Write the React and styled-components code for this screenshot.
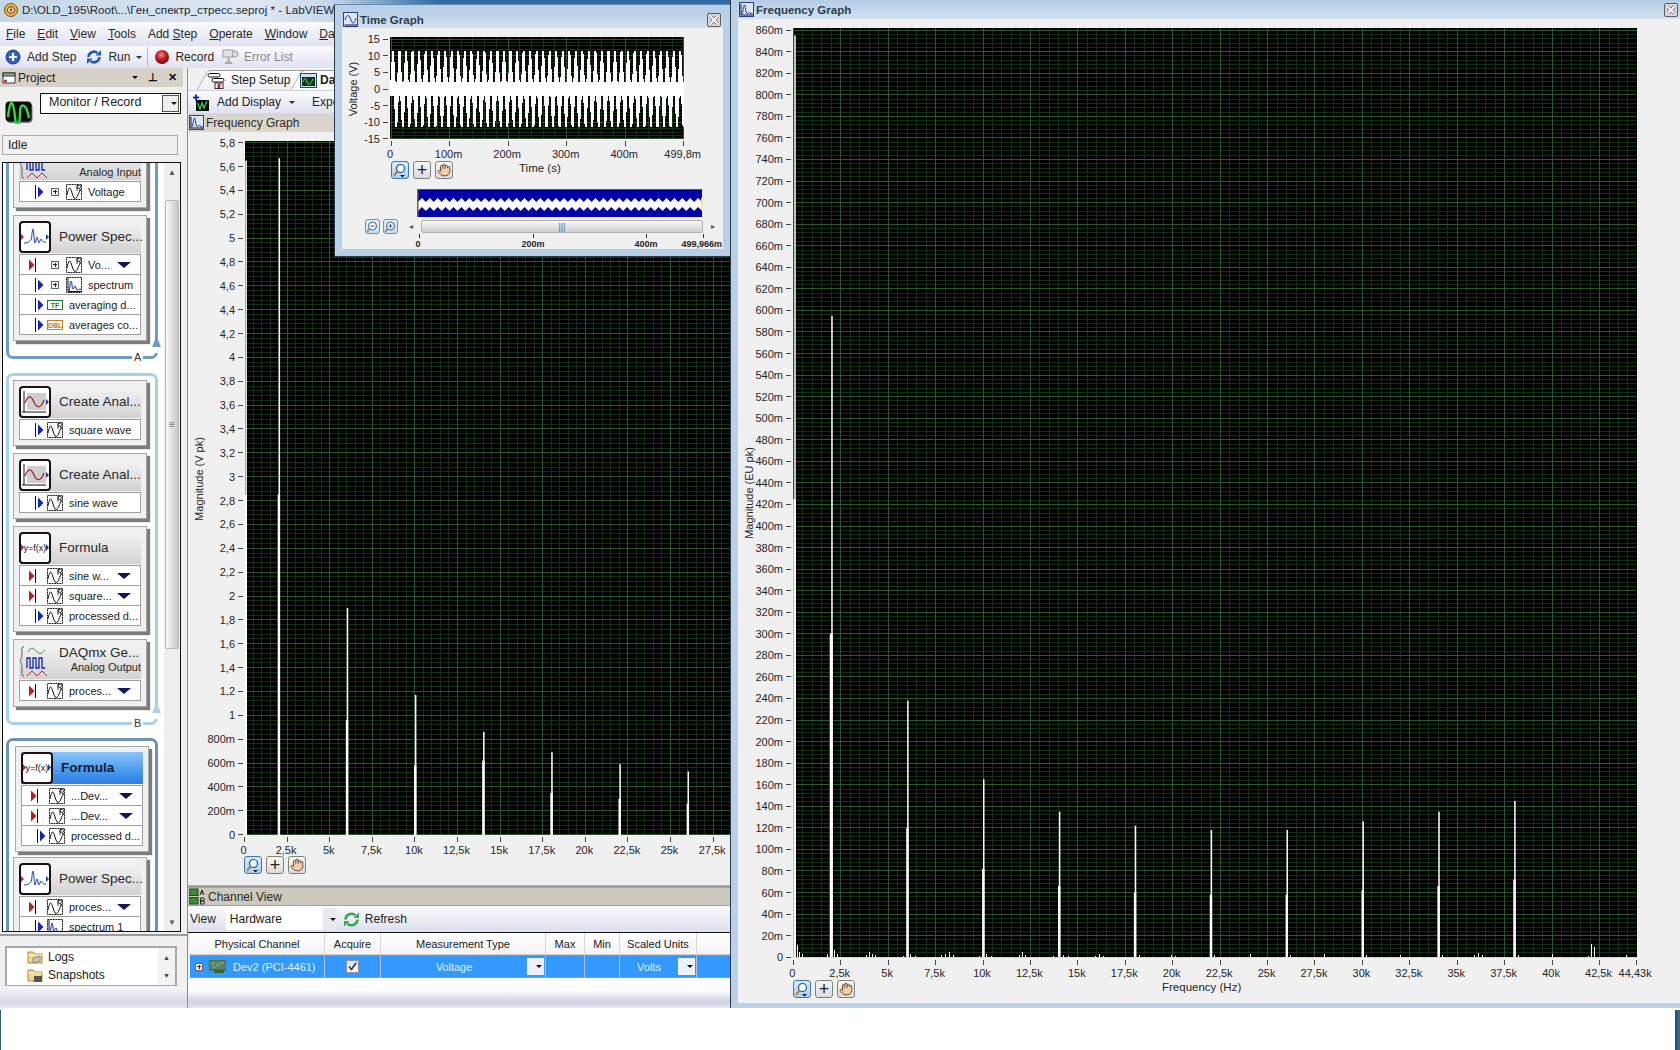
import React from "react";
import styled, { createGlobalStyle } from "styled-components";
import { Hand } from "lucide-react";

const Global = createGlobalStyle`
  html, body { margin: 0; padding: 0; background: #fff; }
  body { font-family: "Liberation Sans", Arial, sans-serif; font-size: 12px; color: #222; }
  * { box-sizing: border-box; }
`;

const Desktop = styled.div`
  position: relative;
  width: 1680px;
  height: 1050px;
  overflow: hidden;
  background: #fff;
`;

const EdgeStrip = styled.div`
  position: absolute;
  top: 1010px;
  bottom: 0;
  ${(p) => (p.$right ? "right: 0; width: 5px;" : "left: 0; width: 1px;")}
  background: linear-gradient(90deg, #1f4a70, #3d6e96);
`;

/* main LabVIEW window */
const MainWindow = styled.div`
  isolation: isolate;
  width: 731px;
  height: 1008px;
  display: flex;
  flex-direction: column;
  background: #f0f0f0;
`;

const TitleBar = styled.div`
  height: 22px;
  display: flex;
  align-items: center;
  gap: 4px;
  padding: 0 0 3px 4px;
  font-size: 11.6px;
  color: #1c2733;
  white-space: nowrap;
  background: linear-gradient(90deg, #c4d6e8, #e0e8f2 35%, #c8d8ea 45%, #2f6aa2 60%, #2f6aa2);
`;

const Bar = styled.div`
  height: ${(p) => p.$h}px;
  display: flex;
  align-items: center;
  white-space: nowrap;
  overflow: hidden;
  background: linear-gradient(180deg, #fbfbfe, #dfe2f0);
`;

const MenuBar = styled(Bar)`
  padding-left: 6px;
  gap: 12px;
  font-size: 12px;
  color: #2a2a2a;
`;

const ToolBar = styled(Bar)`
  padding-left: 5px;
  font-size: 12px;
  color: #2a2a2a;
`;

const ToolLabel = styled.span`
  margin: 0 ${(p) => p.$after || 0}px 0 ${(p) => p.$before || 6}px;
  color: ${(p) => (p.$muted ? "#8a8a8a" : "inherit")};
`;

const Caret = styled.span`
  display: inline-block;
  width: 0;
  height: 0;
  margin: 0 ${(p) => p.$after || 0}px 0 ${(p) => p.$before || 6}px;
  border-left: 3px solid transparent;
  border-right: 3px solid transparent;
  border-top: 3px solid ${(p) => p.$color || "#333"};
`;

const ToolSep = styled.span`
  width: 1px;
  height: 20px;
  margin: 0 6px 0 5px;
  background: #b4b7c4;
`;

const Body = styled.div`
  flex: 1;
  display: flex;
  min-height: 0;
`;

/* left pane */
const LeftPane = styled.div`
  width: 187px;
  display: flex;
  flex-direction: column;
  background: #f0f0f0;
`;

const PanelHeader = styled.div`
  height: 19px;
  width: 183px;
  display: flex;
  align-items: center;
  padding: 0 6px 0 2px;
  gap: 2px;
  font-size: 12px;
  background: #d5d1c9;
`;

const HeaderGlyphs = styled.span`
  margin-left: auto;
  display: flex;
  align-items: center;
  gap: 10px;
  font-size: 11px;
  font-weight: bold;
  color: #111;
`;

const ComboRow = styled.div`
  height: 30px;
  margin-top: 6px;
  padding-left: 5px;
  display: flex;
  align-items: flex-start;
  gap: 7px;
`;

const ComboBox = styled.div`
  width: 141px;
  height: 21px;
  display: flex;
  align-items: center;
  padding: 0 0 0 8px;
  font-size: 12.5px;
  background: #fff;
  border: 1px solid #111;
`;

const ComboText = styled.span`
  margin-top: -3px;
`;

const ComboDrop = styled.span`
  margin-left: auto;
  margin-right: 1px;
  width: 17px;
  height: 17px;
  display: flex;
  align-items: center;
  justify-content: center;
  background: #eee;
  border: 1px solid #555;
`;

const IconSlot = styled.span`
  flex: none;
  margin-top: 7px;
`;

const StatusBox = styled.div`
  width: 176px;
  height: 20px;
  margin: 12px 0 0 2px;
  padding-left: 5px;
  display: flex;
  align-items: center;
  font-size: 12px;
  background: #f0f0f0;
  border: 1px solid #aaa;
`;

const SequenceBox = styled.div`
  width: 179px;
  height: 770px;
  margin: 7px 0 0 2px;
  display: flex;
  background: #fff;
  border: 1px solid #111;
`;

const Scroller = styled.div`
  flex: 1;
  min-width: 0;
  overflow: hidden;
`;

const ScrollTrack = styled.div`
  width: 16px;
  display: flex;
  flex-direction: column;
  align-items: center;
  background: #eeeeee;
`;

const ScrollArrow = styled.div`
  height: 18px;
  display: flex;
  align-items: center;
  justify-content: center;
  margin-top: ${(p) => p.$push || 0};
  color: #555;
  font-size: 8px;
`;

const ScrollThumb = styled.div`
  width: 14px;
  height: 449px;
  margin-top: 19px;
  display: flex;
  align-items: center;
  justify-content: center;
  color: #777;
  font-size: 10px;
  border: 1px solid #bbb;
  border-radius: 2px;
  background: linear-gradient(90deg, #fafafa, #dcdcdc 60%, #c4c4c4);
`;

const Loop = styled.div`
  position: relative;
  width: 152px;
  margin: ${(p) => p.$margin};
  padding: ${(p) => p.$padding};
  display: flex;
  flex-direction: column;
  gap: ${(p) => p.$gap || 7}px;
  border: 3px solid ${(p) => p.$color};
  border-top-width: ${(p) => (p.$open ? 0 : 3)}px;
  border-radius: ${(p) => (p.$open ? "0 0 7px 7px" : "7px")};
`;

const LoopArrow = styled.svg`
  position: absolute;
  right: -6px;
  bottom: 9px;
`;

const LoopGap = styled.span`
  position: absolute;
  right: -3px;
  bottom: 3px;
  width: 3px;
  height: 6px;
  background: #fff;
`;

const LoopLabel = styled.span`
  position: absolute;
  left: 123px;
  bottom: -7px;
  padding: 0 2px;
  font-size: 11px;
  line-height: 12px;
  color: #333;
  background: #fff;
`;

const Card = styled.div`
  width: 134px;
  margin-left: ${(p) => (p.$selected ? 6 : 4)}px;
  padding: 5px;
  background: #f0f0f0;
  border: 1px solid #a8a8a8;
  box-shadow: 3px 3px 1px #7c7c7c;
`;

const CardHead = styled.div`
  height: ${(p) => (p.$tall ? 34 : 32)}px;
  margin-bottom: 1px;
  display: flex;
  align-items: center;
  background: ${(p) =>
    p.$selected
      ? "linear-gradient(180deg, #8cc4f8, #3f92ec 70%, #2f7fe0)"
      : "linear-gradient(180deg, #f4f4f4, #d2d2d2)"};
`;

const CardTitles = styled.div`
  flex: 1;
  min-width: 0;
  align-self: ${(p) => (p.$tall ? "flex-start" : "center")};
  padding-left: 8px;
  display: flex;
  flex-direction: column;
`;

const CardTitle = styled.div`
  min-height: 16px;
  font-size: 13.5px;
  font-weight: ${(p) => (p.$selected ? "bold" : "normal")};
  line-height: 16px;
  color: ${(p) => (p.$selected ? "#0a1c33" : "#2a2a2a")};
  white-space: nowrap;
`;

const CardSub = styled.div`
  font-size: 11px;
  line-height: 13px;
  text-align: right;
  white-space: nowrap;
  color: #2a2a2a;
`;

const StepIconFrame = styled.span`
  flex: none;
  width: 32px;
  height: 32px;
  background: #fff;
  border: 2px solid #1c0f1a;
  border-radius: 4px;
  display: block;
`;

const IoRow = styled.div`
  height: 21px;
  display: flex;
  align-items: center;
  font-size: 11px;
  color: #222;
  white-space: nowrap;
  background: #fff;
  border: 1px solid #a0a0a0;
  & + & { margin-top: -1px; }
`;

const RowText = styled.span`
  margin-left: 6px;
`;

const RowSpacer = styled.span`
  flex: none;
  width: 3px;
`;

const PlusBox = styled.span`
  flex: none;
  width: 8px;
  height: 8px;
  margin: 0 ${(p) => p.$r ?? 7}px 0 ${(p) => p.$l ?? 7}px;
  position: relative;
  border: 1px solid #666;
  background: #f4f4f4;
  &::before { content: ""; position: absolute; left: 1px; right: 1px; top: 2.5px; height: 1px; background: #222; }
  &::after { content: ""; position: absolute; top: 1px; bottom: 1px; left: 2.5px; width: 1px; background: #222; }
`;

const TypeTag = styled.span`
  flex: none;
  width: 16px;
  height: 10px;
  font-size: 7px;
  font-weight: bold;
  line-height: 9px;
  text-align: center;
  color: ${(p) => p.$color};
  background: #fff;
  border: 1px solid ${(p) => p.$color};
`;

const RowDrop = styled.span`
  margin-left: auto;
  margin-right: 9px;
  width: 0;
  height: 0;
  border-left: 7px solid transparent;
  border-right: 7px solid transparent;
  border-top: 6px solid #12125c;
`;

const PaneRule = styled.div`
  height: 2px;
  margin-top: 2px;
  background: #9b9b9b;
`;

const TreeBox = styled.div`
  width: 172px;
  height: 40px;
  margin: 10px 0 0 5px;
  display: flex;
  background: #fff;
  border: 2px solid #a8a8a8;
  border-bottom-width: 1px;
`;

const TreeList = styled.div`
  flex: 1;
  padding: 0 0 0 20px;
  display: flex;
  flex-direction: column;
  gap: 1px;
`;

const TreeItem = styled.div`
  height: 17px;
  display: flex;
  align-items: center;
  gap: 5px;
  font-size: 12px;
`;

const TreeScroll = styled.div`
  width: 17px;
  display: flex;
  flex-direction: column;
  justify-content: space-around;
  align-items: center;
  font-size: 7px;
  color: #444;
  background: #f2f2f2;
`;

const BottomBand = styled.div`
  flex: 1;
  margin-top: 1px;
  background: linear-gradient(180deg, #f6f6fb, #d6d9e8 70%, #e4e6f0);
`;

/* right side of the main window */
const RightPane = styled.div`
  flex: 1;
  min-width: 0;
  display: flex;
  flex-direction: column;
  border-left: 1px solid #8d8d8d;
  overflow: hidden;
`;

const TabStrip = styled.div`
  height: 22px;
  padding: 2px 0 0 14px;
  display: flex;
  background: #f0f0f0;
`;

const Tab = styled.div`
  position: relative;
  z-index: ${(p) => (p.$active ? 1 : 0)};
  height: 20px;
  margin-left: ${(p) => (p.$active ? -6 : 0)}px;
  padding: 0 4px 0 ${(p) => (p.$active ? 4 : 5)}px;
  width: ${(p) => p.$w}px;
  display: flex;
  align-items: center;
  gap: ${(p) => (p.$active ? 3 : 6)}px;
  font-size: 12px;
  font-weight: ${(p) => (p.$active ? "bold" : "normal")};
  white-space: nowrap;
  &::before {
    content: "";
    position: absolute;
    inset: 0;
    z-index: -1;
    background: linear-gradient(180deg, #fff, ${(p) => (p.$active ? "#fff" : "#eceef4")});
    border: 1px solid #9a9a9a;
    border-bottom: 0;
    border-radius: 3px 3px 0 0;
    transform: skewX(-30deg);
  }
`;

const AddDisplayBar = styled(Bar)`
  padding-left: 4px;
  font-size: 12px;
  border-top: 1px solid #cfcfd8;
`;

const SectionBar = styled.div`
  height: ${(p) => p.$h}px;
  display: flex;
  align-items: center;
  gap: 2px;
  padding-left: 1px;
  font-size: 12px;
  color: #2a2a2a;
  background: ${(p) => p.$bg};
  border-top: ${(p) => (p.$rule ? "2px solid #a5a29a" : "0")};
  border-bottom: ${(p) => (p.$rule ? "1px solid #a5a29a" : "0")};
`;

const GraphPane = styled.div`
  height: 754px;
  background: #f0f0f0;
  border-bottom: 1px solid #aaa;
`;

const ChartSvg = styled.svg`
  display: block;
  font-family: "Liberation Sans", Arial, sans-serif;
  font-size: 11px;
  text { fill: #262626; }
`;

const ToolRow = styled.div`
  display: flex;
  align-items: flex-start;
  padding-left: ${(p) => p.$left}px;
  gap: 4px;
`;

const ToolBtn = styled.span`
  width: 18px;
  height: 18px;
  display: flex;
  align-items: center;
  justify-content: center;
  font-size: 18px;
  line-height: 16px;
  color: #222;
  border: 1px solid ${(p) => (p.$on ? "#3a7ab0" : "#808080")};
  border-radius: 3px;
  background: ${(p) => (p.$on ? "linear-gradient(180deg, #d6ebfb, #a9d0f0)" : "linear-gradient(180deg, #f6f6f6, #dcdcdc)")};
`;

const AxisTitle = styled.span`
  margin-left: ${(p) => p.$offset}px;
  font-size: 11.5px;
  line-height: 14px;
  color: #262626;
`;

const ChannelTools = styled.div`
  height: 26px;
  display: flex;
  align-items: center;
  padding-left: 2px;
  font-size: 12px;
  background: linear-gradient(180deg, #fbfbfe, #dde0ee);
`;

const ChannelCombo = styled.div`
  width: 111px;
  height: 22px;
  margin: 0 6px 0 10px;
  padding-left: 4px;
  display: flex;
  align-items: center;
  background: #fff;
`;

const ChannelDrop = styled.span`
  margin-left: auto;
  width: 14px;
  height: 100%;
  display: flex;
  align-items: center;
  justify-content: center;
  background: #e8e8ee;
`;

const ChannelTable = styled.div`
  border-top: 1px solid #111;
  display: grid;
  grid-template-columns: 135px 56px 165px 39px 35px 77px 1fr;
  padding-left: 2px;
  font-size: 11px;
`;

const HeadCell = styled.div`
  height: 22px;
  display: flex;
  align-items: center;
  justify-content: center;
  white-space: nowrap;
  border-right: 1px solid #d8d8d8;
  background: linear-gradient(180deg, #fff, #f4f4f6);
  border-bottom: 1px solid #cfcfcf;
`;

const BodyCell = styled.div`
  position: relative;
  height: 23px;
  display: flex;
  align-items: center;
  white-space: nowrap;
  justify-content: ${(p) => (p.$start ? "flex-start" : "center")};
  padding: ${(p) => p.$pad || "0"};
  color: #e0f0ff;
  background: #3399ff;
  border-top: 1px solid #8a8fa0;
  border-bottom: 1px solid #8a9ab0;
  border-right: 1px solid #b0c4d8;
`;

const DeviceName = styled.span`
  margin-left: 7px;
`;

const CellDrop = styled.span`
  position: absolute;
  right: 1px;
  top: 2px;
  width: 17px;
  height: 17px;
  display: flex;
  align-items: center;
  justify-content: center;
  background: #eef2f8;
`;

const CheckBox = styled.span`
  width: 13px;
  height: 13px;
  display: flex;
  align-items: center;
  justify-content: center;
  background: linear-gradient(180deg, #d8dce4, #fafafa);
  border: 1px solid #8a94a4;
`;

const ChannelFill = styled.div`
  flex: 1;
  background: linear-gradient(180deg, #fff, #fff 40%, #cdd1e2 80%, #e6e8f2);
`;

/* floating graph windows */
const FloatWindow = styled.div`
  position: absolute;
  left: ${(p) => p.$x}px;
  top: ${(p) => p.$y}px;
  width: ${(p) => p.$w}px;
  height: ${(p) => p.$h}px;
  display: flex;
  flex-direction: column;
  padding: ${(p) => p.$pad};
  background: #b9d1e8;
  border-left: 1px solid #2c3a48;
  border-right: ${(p) => (p.$edge ? "1px solid #2c3a48" : "0")};
  border-bottom: ${(p) => (p.$edge ? "1px solid #2c3a48" : "0")};
  border-top: ${(p) => (p.$edge ? "1px solid #5f87ad" : "0")};
`;

const WinTitle = styled.div`
  height: ${(p) => p.$h}px;
  flex: none;
  display: flex;
  align-items: center;
  gap: 2px;
  padding: 0 2px 0 1px;
  font-size: 11.5px;
  font-weight: bold;
  color: #2c3c4c;
  background: linear-gradient(180deg, #b4cde6, #d4e2f1);
`;

const WinClose = styled.svg`
  margin-left: auto;
`;

const WinContent = styled.div`
  flex: 1;
  min-height: 0;
  background: #f0f0f0;
`;

const OverviewBlock = styled.div`
  margin-top: 9px;
`;

const OverviewSvg = styled.svg`
  display: block;
`;

const OverviewScroll = styled.div`
  height: 13px;
  margin-top: 3px;
  padding-left: 23px;
  display: flex;
  align-items: center;
`;

const MiniBtn = styled.span`
  width: 15px;
  height: 15px;
  margin-right: 3px;
  display: flex;
  align-items: center;
  justify-content: center;
  border: 1px solid #6f94b8;
  border-radius: 3px;
  background: linear-gradient(180deg, #e6f1fb, #c4dcf2);
`;

const MiniArrow = styled.span`
  width: ${(p) => p.$w}px;
  text-align: center;
  font-size: 8px;
  color: #555;
`;

const OverThumb = styled.div`
  width: 284px;
  height: 13px;
  display: flex;
  align-items: center;
  justify-content: center;
  font-size: 9px;
  color: #666;
  border: 1px solid #b0b0b0;
  border-radius: 2px;
  background: linear-gradient(180deg, #f8f8f8, #cfcfcf);
`;

/* ---- icons ---- */
const AppIcon = () => (
  <svg width="14" height="14" viewBox="0 0 14 14">
    <circle cx="7" cy="7" r="6.5" fill="#e9b62c" stroke="#7a5a10" />
    <path d="M3 7l2-3h4l2 3-2 3H5z" fill="#f7f0d0" stroke="#8a2a2a" />
    <circle cx="7" cy="7" r="1.4" fill="#b03030" />
  </svg>
);

const AddIcon = () => (
  <svg width="16" height="16" viewBox="0 0 16 16">
    <circle cx="8" cy="8" r="7" fill="#2f62c8" stroke="#16357a" />
    <path d="M8 4v8M4 8h8" stroke="#fff" strokeWidth="2.2" />
  </svg>
);

const RunIcon = () => (
  <svg width="16" height="16" viewBox="0 0 16 16" fill="none">
    <path d="M2.5 8a5.5 5.5 0 0 1 9-4" stroke="#1f5ec0" strokeWidth="2.6" />
    <path d="M9.5 6.5h5.5V1z" fill="#1f5ec0" />
    <path d="M13.5 8a5.5 5.5 0 0 1-9 4" stroke="#1f5ec0" strokeWidth="2.6" />
    <path d="M6.5 9.5H1V15z" fill="#1f5ec0" />
  </svg>
);

const RecordIcon = () => (
  <svg width="16" height="16" viewBox="0 0 16 16">
    <defs>
      <radialGradient id="rec" cx="45%" cy="35%" r="65%">
        <stop offset="0" stopColor="#f09090" />
        <stop offset="0.5" stopColor="#c82020" />
        <stop offset="1" stopColor="#6a0808" />
      </radialGradient>
    </defs>
    <circle cx="8" cy="8" r="7" fill="url(#rec)" />
  </svg>
);

const ErrorListIcon = () => (
  <svg width="17" height="16" viewBox="0 0 17 16">
    <rect x="1" y="1" width="10" height="7" fill="#e4e4e4" stroke="#9a9a9a" />
    <rect x="5" y="8" width="3" height="5" fill="#bbb" />
    <rect x="3" y="13" width="7" height="2" fill="#aaa" />
    <circle cx="13" cy="5" r="3" fill="#d8d8d8" stroke="#a0a0a0" />
  </svg>
);

const ProjectIcon = () => (
  <svg width="14" height="14" viewBox="0 0 14 14">
    <rect x="1" y="2" width="12" height="10" fill="#fff" stroke="#335" />
    <rect x="1" y="2" width="12" height="3" fill="#7fb56f" stroke="#335" />
    <circle cx="3.5" cy="10" r="1.6" fill="#b03030" />
  </svg>
);

const MonitorIcon = () => (
  <svg width="28" height="24" viewBox="0 0 28 24">
    <rect x="1.5" y="3" width="26" height="20" rx="4" fill="#777" />
    <rect x="0.5" y="1.5" width="26" height="20" rx="4" fill="#0a0a0a" />
    <path d="M3 17c2-19 5-19 7 0s5 4 5-5 6-10 9 6" fill="none" stroke="#37d24a" strokeWidth="2.4" />
  </svg>
);

const GraphGlyph = () => (
  <svg width="15" height="15" viewBox="0 0 15 15" fill="none">
    <rect x="0.5" y="0.5" width="14" height="14" fill="#dce8f6" stroke="#2a3f90" />
    <path d="M2 13V2M1.5 13H14" stroke="#111" />
    <path d="M3 12c1-1 1.5-9 2.5-9s1 8 2.5 8.5 1.5-2 2.5-1 2 1.5 3 1.5" stroke="#2030b0" />
  </svg>
);

const TimeGlyph = () => (
  <svg width="15" height="15" viewBox="0 0 15 15" fill="none">
    <rect x="0.5" y="0.5" width="14" height="14" fill="#dce8f6" stroke="#2a3f90" />
    <path d="M1.5 13H14" stroke="#111" />
    <path d="M2 8c2-7 4-5 6 0s3 4 5-2" stroke="#2030b0" />
  </svg>
);

const WrenchIcon = () => (
  <svg width="18" height="17" viewBox="0 0 18 17" fill="none">
    <rect x="1" y="1.5" width="12" height="3.5" rx="1.7" fill="#fff" stroke="#111" />
    <rect x="5" y="6.5" width="12" height="3.5" rx="1.7" fill="#fff" stroke="#111" />
    <rect x="8" y="11" width="8" height="5.5" fill="#fff" stroke="#333" />
    <rect x="10.5" y="11.5" width="3" height="4.5" fill="#b33" />
  </svg>
);

const DataTabIcon = () => (
  <svg width="17" height="15" viewBox="0 0 17 15" fill="none">
    <rect x="0.5" y="0.5" width="16" height="14" fill="#cfe2f5" stroke="#244a78" />
    <rect x="2" y="4" width="13" height="9" fill="#0c3a12" />
    <path d="M3 9c2-5 3-4 4 0s3 3 6-3" stroke="#7ae07a" />
  </svg>
);

const AddDisplayIcon = () => (
  <svg width="17" height="17" viewBox="0 0 17 17" fill="none">
    <path d="M4 0.5v6M1 3.5h6" stroke="#1a2fc0" strokeWidth="2" />
    <rect x="4" y="6" width="13" height="11" fill="#0a0a0a" />
    <path d="M5.5 9l2.5 6 2-6 2 5 3-7" stroke="#3ecf4a" strokeWidth="1.3" />
  </svg>
);

const ChannelIcon = () => (
  <svg width="17" height="17" viewBox="0 0 17 17">
    <rect x="0" y="1" width="9" height="6.5" fill="#3f8a3a" stroke="#174a14" />
    <rect x="0" y="9.5" width="9" height="6.5" fill="#3f8a3a" stroke="#174a14" />
    <path d="M11 7l2-5 2 5M12 5h2M11.5 10h2.5a1.5 1.5 0 0 1 0 3h-2.5zM11.5 13H14a1.5 1.5 0 0 1 0 3h-2.5z" fill="none" stroke="#222" />
  </svg>
);

const RefreshIcon = () => (
  <svg width="17" height="17" viewBox="0 0 17 17" fill="none">
    <path d="M2.5 8.5a6 6 0 0 1 10-4.2" stroke="#38a84a" strokeWidth="2.6" />
    <path d="M10.5 7H16V1.5z" fill="#38a84a" />
    <path d="M14.5 8.5a6 6 0 0 1-10 4.2" stroke="#38a84a" strokeWidth="2.6" />
    <path d="M6.5 10H1v5.5z" fill="#38a84a" />
  </svg>
);

const PciIcon = () => (
  <svg width="17" height="13" viewBox="0 0 17 13">
    <rect x="0" y="0" width="17" height="10" fill="#5d8560" stroke="#3b5a3e" />
    <path d="M3 3h2M7 5h3M11 3h3M4 7h2" stroke="#9fc09a" />
    <rect x="5" y="10" width="10" height="3" fill="#3a6040" />
  </svg>
);

const FolderIcon = ({ camera }) => (
  <svg width="16" height="16" viewBox="0 0 16 16">
    <path d="M1 3h5l2 2h7v9H1z" fill="#f2d888" stroke="#a98a3a" />
    <path d="M1 6h14" stroke="#fff3c4" />
    {camera ? <rect x="7" y="9" width="8" height="6" fill="#555" /> : <path d="M6 9l7-2v5l-7 2z" fill="#c8c8c8" stroke="#888" />}
  </svg>
);

const CloseIcon = () => (
  <WinClose width="14" height="14" viewBox="0 0 14 14">
    <rect x="0.5" y="0.5" width="13" height="13" rx="1.5" fill="#ded7dc" stroke="#5c5c5c" />
    <path d="M3.5 3.5l7 7M10.5 3.5l-7 7" stroke="#6a6a6a" strokeWidth="3.4" />
    <path d="M3.5 3.5l7 7M10.5 3.5l-7 7" stroke="#fff" strokeWidth="2" />
  </WinClose>
);

const Magnifier = () => (
  <svg width="14" height="15" viewBox="0 0 14 15" fill="none">
    <circle cx="7.5" cy="5.5" r="4" fill="#f6fbff" stroke="#24557f" strokeWidth="1.2" />
    <path d="M4.5 8.5L1 12.5" stroke="#c07a3a" strokeWidth="2" />
    <path d="M7 12h5l-2.5 2.5z" fill="#123" />
  </svg>
);

const MiniMag = ({ plus }) => (
  <svg width="12" height="12" viewBox="0 0 12 12" fill="none">
    <circle cx="6.5" cy="5" r="4" fill="#fff" stroke="#2b5f92" />
    <path d="M4.5 5h4" stroke="#2b5f92" />
    {plus ? <path d="M6.5 3v4" stroke="#2b5f92" /> : null}
    <path d="M3.5 8L1 11" stroke="#c07a3a" strokeWidth="1.6" />
  </svg>
);

const ZoomTools = () => (
  <>
    <ToolBtn $on><Magnifier /></ToolBtn>
    <ToolBtn>+</ToolBtn>
    <ToolBtn><Hand size={14} color="#4a3418" fill="#f2cfa2" strokeWidth={1.4} /></ToolBtn>
  </>
);

const WaveIcon = () => (
  <svg width="16" height="16" viewBox="0 0 16 16" fill="none">
    <rect x="0.5" y="0.5" width="15" height="15" fill="#fff" stroke="#222" strokeDasharray="2 0.6" />
    <path d="M1 11c2-9 3-9 5-2s4 7 6 2 2-5 3-6" stroke="#111" />
    <path d="M11 1.5h2.5a1.2 1.2 0 0 1 0 2.6H11zM11 1.5V7M13 4l1.5 3" stroke="#111" strokeWidth="0.8" />
  </svg>
);

const SpectrumIcon = () => (
  <svg width="16" height="16" viewBox="0 0 16 16" fill="none">
    <rect x="0.5" y="0.5" width="15" height="15" fill="#fff" stroke="#222" strokeDasharray="2 0.6" />
    <path d="M2 1v13.5H15" stroke="#111" />
    <path d="M3 14c1-2 1-10 2-10s1 8 2 8 1-3 2-3 1 4 2 4 2-1 4-1" stroke="#1420a8" />
  </svg>
);

const PortSvg = styled.svg`
  flex: none;
`;

const Port = ({ input, output }) => (
  <PortSvg width="24" height="16" viewBox="0 0 24 16">
    <rect x="15" y="1" width="1" height="14" fill="#111" />
    {input ? <path d="M9 2.5l5.5 5.5L9 13.5z" fill="#c01826" /> : null}
    {output ? <path d="M18 2.5l5.5 5.5L18 13.5z" fill="#1424b8" /> : null}
  </PortSvg>
);

const DaqSvg = styled.svg`
  flex: none;
`;

const DaqArt = () => (
  <DaqSvg width="32" height="34" viewBox="0 0 32 34" fill="none">
    <path d="M5 2c-3 0-2 1-2 6s-1 7-2 8c1 1 2 3 2 8s-1 7 2 7" stroke="#555" />
    <path d="M9 7c3-6 5-4 8-1s5 4 9-1" stroke="#2d9a3a" />
    <path d="M8 23V13h3v10h3V13h3v10h3V13h3v10h3" stroke="#1424b8" strokeWidth="1.3" />
    <path d="M8 31l5-5 5 5 5-5 5 5" stroke="#c82030" />
  </DaqSvg>
);

const StepArt = ({ kind }) => {
  if (kind === "daq") return <DaqArt />;
  return (
    <StepIconFrame>
      <svg width="28" height="28" viewBox="0 0 28 28" fill="none">
        {kind === "create" && (
          <>
            <rect x="6" y="5" width="19" height="17" fill="#cfcfcf" />
            <path d="M3 3v21M1 24h24" stroke="#111" />
            <path d="M4 15c3-8 6-8 9-1s7 6 10-2" stroke="#9a2a30" strokeWidth="1.3" />
            <path d="M25 11l3 3-3 3z" fill="#2040a0" />
          </>
        )}
        {kind === "power" && (
          <>
            <path d="M3 20c5 0 5-2 7-3 1-1 1-11 2-11s1 14 2 14 1-6 2-6 1 6 2 6 1-4 2-4 1 4 5 3" stroke="#1a40b0" />
            <path d="M0 11l3 3-3 3z" fill="#c02030" />
            <path d="M25 11l3 3-3 3z" fill="#2040a0" />
          </>
        )}
        {kind === "formula" && (
          <>
            <text x="14" y="17" fontSize="9" fontFamily="Liberation Sans, sans-serif" textAnchor="middle" fill="#111">y=f(x)</text>
            <path d="M0 10l3 3.5-3 3.5z" fill="#c02030" />
            <path d="M25 10l3 3.5-3 3.5z" fill="#2040a0" />
          </>
        )}
      </svg>
    </StepIconFrame>
  );
};

/* ---- sequence data ---- */
const inp = (text) => ({ input: true, icon: "wave", text, drop: true });
const out = (text, icon = "wave") => ({ output: true, icon, text });

const loopA = [
  { kind: "daq", title: "", sub: "Analog Input", rows: [{ output: true, plus: true, icon: "wave", text: "Voltage" }] },
  {
    kind: "power",
    title: "Power Spec...",
    rows: [
      { input: true, plus: true, icon: "wave", text: "Vo...", drop: true },
      { output: true, plus: true, icon: "spectrum", text: "spectrum" },
      { output: true, tag: ["TF", "#1f7a2a"], text: "averaging d..." },
      { output: true, tag: ["DBL", "#d07a20"], text: "averages co..." },
    ],
  },
];

const loopB = [
  { kind: "create", title: "Create Anal...", rows: [out("square wave")] },
  { kind: "create", title: "Create Anal...", rows: [out("sine wave")] },
  { kind: "formula", title: "Formula", rows: [inp("sine w..."), inp("square..."), out("processed d...")] },
  { kind: "daq", tall: true, title: "DAQmx Ge...", sub: "Analog Output", rows: [inp("proces...")] },
];

const loopC = [
  { kind: "formula", selected: true, title: "Formula", rows: [inp("...Dev..."), inp("...Dev..."), out("processed d...")] },
  { kind: "power", title: "Power Spec...", rows: [inp("proces..."), out("spectrum 1", "spectrum"), out("spectrum 2", "spectrum")] },
];

const StepCard = ({ step }) => (
  <Card $selected={step.selected}>
    <CardHead $selected={step.selected} $tall={step.tall}>
      <StepArt kind={step.kind} />
      <CardTitles $tall={step.tall}>
        <CardTitle $selected={step.selected}>{step.title}</CardTitle>
        {step.sub ? <CardSub>{step.sub}</CardSub> : null}
      </CardTitles>
    </CardHead>
    {step.rows.map((r, i) => (
      <IoRow key={i}>
        <Port input={r.input} output={r.output} />
        {r.plus ? <PlusBox /> : <RowSpacer />}
        {r.tag ? <TypeTag $color={r.tag[1]}>{r.tag[0]}</TypeTag> : null}
        {r.icon === "wave" ? <WaveIcon /> : null}
        {r.icon === "spectrum" ? <SpectrumIcon /> : null}
        <RowText>{r.text}</RowText>
        {r.drop ? <RowDrop /> : null}
      </IoRow>
    ))}
  </Card>
);

const LoopEnd = ({ label, color }) => (
  <>
    <LoopGap />
    <LoopArrow width="9" height="11" viewBox="0 0 9 11">
      <path d="M4.5 0L9 11H0z" fill={color} />
    </LoopArrow>
    <LoopLabel>{label}</LoopLabel>
  </>
);

/* ---- charts ---- */
const GRID_MAJOR = "#2a582a";
const GRID_MINOR = "#143014";

function GridPlot({ id, view, rect, xPx, yPx, xStep, yStep, xTicks, yTicks, yLabel, children }) {
  const { l, t, r, b } = rect;
  const vLines = [];
  for (let i = 0; xPx((i * xStep) / 5) <= r; i++) vLines.push([xPx((i * xStep) / 5), i % 5 === 0]);
  const hLines = [];
  for (let i = 0; yPx((i * yStep) / 5 + (rect.yFrom || 0)) >= t; i++) hLines.push([yPx((i * yStep) / 5 + (rect.yFrom || 0)), i % 5 === 0]);
  return (
    <ChartSvg width={view[2]} height={view[3]} viewBox={view.join(" ")}>
      <clipPath id={id}><rect x={l} y={t} width={r - l} height={b - t} /></clipPath>
      <rect x={l} y={t} width={r - l} height={b - t} fill="#000" />
      <g shapeRendering="crispEdges" clipPath={`url(#${id})`}>
        {hLines.filter((h) => !h[1]).map((h, i) => <line key={i} x1={l} x2={r} y1={h[0]} y2={h[0]} stroke={GRID_MINOR} />)}
        {vLines.filter((v) => !v[1]).map((v, i) => <line key={i} y1={t} y2={b} x1={v[0]} x2={v[0]} stroke={GRID_MINOR} />)}
        {hLines.filter((h) => h[1]).map((h, i) => <line key={i} x1={l} x2={r} y1={h[0]} y2={h[0]} stroke={GRID_MAJOR} />)}
        {vLines.filter((v) => v[1]).map((v, i) => <line key={i} y1={t} y2={b} x1={v[0]} x2={v[0]} stroke={GRID_MAJOR} />)}
        {children}
      </g>
      <g shapeRendering="crispEdges" stroke="#444">
        {yTicks.map(([v], i) => <line key={i} x1={l - 7} x2={l - 2} y1={yPx(v)} y2={yPx(v)} />)}
        {xTicks.map(([v], i) => <line key={i} y1={b + 2} y2={b + 7} x1={xPx(v)} x2={xPx(v)} />)}
      </g>
      {yTicks.map(([v, s], i) => <text key={i} x={l - 10} y={yPx(v) + 4} textAnchor="end">{s}</text>)}
      {xTicks.map(([v, s], i) => <text key={i} x={xPx(v) - 1} y={b + 19} textAnchor="middle">{s}</text>)}
      <text transform={`translate(${yLabel.x} ${yLabel.y}) rotate(-90)`} textAnchor="middle">{yLabel.text}</text>
    </ChartSvg>
  );
}

const Spikes = ({ list, xPx, yPx, bottom }) => (
  <g fill="#fff" shapeRendering="auto">
    {list.map(([k, top, mid, w = 2.4], i) => (
      <g key={i}>
        <rect x={xPx(k)} y={yPx(top)} width={1.5} height={bottom - yPx(top)} />
        <rect x={xPx(k) - w + 1.5} y={yPx(mid)} width={w} height={bottom - yPx(mid)} />
      </g>
    ))}
  </g>
);

const comma = (n) => String(n).replace(".", ",");
const kTicks = (max) => {
  const out = [];
  for (let v = 0; v <= max; v += 2.5) out.push([v, v === 0 ? "0" : `${comma(v)}k`]);
  return out;
};

const rightX = (k) => 793.3 + k * 18.97;
const rightY = (m) => 957.2 - m * 1.078;
const rightYTicks = [];
for (let m = 860; m >= 0; m -= 20) rightYTicks.push([m, m === 0 ? "0" : `${m}m`]);
const rightSpikes = [
  [0.05, 855, 425], [2, 595, 300, 3], [6, 238, 120], [10, 165, 82], [14, 135, 66], [18, 122, 60],
  [22, 118, 58], [26, 118, 58], [30, 126, 62], [34, 135, 66], [38, 145, 72],
];
const rightNoise = [
  [0.2, 11], [0.3, 5], [0.45, 3], [1.8, 3], [2.15, 7], [2.3, 3], [3.85, 2], [4, 5], [4.15, 3], [4.3, 2],
  [5.8, 1], [6.15, 3], [6.4, 1], [7.8, 2], [8, 3], [8.2, 5], [8.4, 2], [9.8, 1], [10.15, 3], [10.4, 1],
  [11.9, 2], [12.05, 5], [12.2, 2], [13.7, 1], [14.2, 2], [14.5, 1], [15.9, 1], [16.1, 3], [16.3, 1],
  [18.2, 2], [19.9, 2], [20.1, 1], [22.2, 2], [24.1, 3], [26.2, 2], [28, 3], [30.2, 2], [32, 2],
  [34.2, 2], [35.9, 2], [36.1, 4], [36.3, 2], [38.2, 2], [40, 3], [42.05, 12], [42.2, 9], [41.9, 1], [43.9, 2],
];

const leftX = (k) => 244.5 + k * 17.04;
const leftY = (v) => 834.6 - v * 119.3;
const leftYTicks = [];
for (let i = 29; i >= 0; i--) {
  const v = i / 5;
  leftYTicks.push([v, i === 0 ? "0" : v < 1 ? `${i * 200}m` : comma(v)]);
}
const leftSpikes = [
  [0.05, 5.65, 2.85], [2, 5.67, 2.85], [6, 1.9, 0.96], [10, 1.17, 0.58], [14, 0.86, 0.62], [18, 0.69, 0.35], [22, 0.59, 0.3], [26, 0.53, 0.26],
];

const timeX = (ms) => 391 + ms * 0.5855;
const timeY = (v) => 88 - v * 3.33;
const timeXTicks = [[0, "0"], [100, "100m"], [200, "200m"], [300, "300m"], [400, "400m"], [499.8, "499,8m"]];
const timeYTicks = [15, 10, 5, 0, -5, -10, -15].map((v) => [v, String(v)]);

// one tapered tooth of the time signal, wide at the centre band and narrow at the tip
const tooth = (c, s) =>
  `M${c - 2.8} ${timeY(s * 1)}L${c - 1.8} ${timeY(s * 6)}L${c - 1} ${timeY(s * 11.5)}L${c + 1} ${timeY(s * 11.5)}L${c + 1.8} ${timeY(s * 6)}L${c + 2.8} ${timeY(s * 1)}Z`;

const wavePath = () => {
  let d = "";
  for (let i = 0; i < 45; i++) {
    const c = 393 + i * 6.53;
    d += tooth(c, 1) + tooth(c + 3.3, -1);
  }
  return d;
};

const zigzagPath = () => {
  const n = 36;
  const step = 284 / n;
  const top = [];
  const bot = [];
  for (let i = 0; i <= n; i++) {
    top.push(`${i * step} 12`);
    if (i < n) top.push(`${i * step + step / 2} 8`);
    bot.push(`${i * step} 21`);
    if (i < n) bot.push(`${i * step + step / 2} 17`);
  }
  return `M${top.join("L")}L${bot.reverse().join("L")}Z`;
};

const menu = [
  ["F", "ile"], ["E", "dit"], ["V", "iew"], ["T", "ools"], ["Add ", "S", "tep"], ["O", "perate"], ["W", "indow"], ["D", "ata"],
];

export default function App() {
  return (
    <>
      <Global />
      <Desktop>
        <MainWindow>
          <TitleBar>
            <AppIcon />
            <span>D:\OLD_195\Root\...\Ген_спектр_стресс.seproj * - LabVIEW</span>
          </TitleBar>
          <MenuBar $h={24}>
            {menu.map((m, i) =>
              m.length === 3 ? (
                <span key={i}>{m[0]}<u>{m[1]}</u>{m[2]}</span>
              ) : (
                <span key={i}><u>{m[0]}</u>{m[1]}</span>
              )
            )}
          </MenuBar>
          <ToolBar $h={22}>
            <AddIcon />
            <ToolLabel $after={10}>Add Step</ToolLabel>
            <RunIcon />
            <ToolLabel>Run</ToolLabel>
            <Caret />
            <ToolSep />
            <RecordIcon />
            <ToolLabel $before={5} $after={8}>Record</ToolLabel>
            <ErrorListIcon />
            <ToolLabel $before={5} $muted>Error List</ToolLabel>
          </ToolBar>
          <Body>
            <LeftPane>
              <PanelHeader>
                <ProjectIcon />
                <span>Project</span>
                <HeaderGlyphs>
                  <Caret $before={0} $color="#111" />
                  <span>⊥</span>
                  <span>✕</span>
                </HeaderGlyphs>
              </PanelHeader>
              <ComboRow>
                <IconSlot><MonitorIcon /></IconSlot>
                <ComboBox>
                  <ComboText>Monitor / Record</ComboText>
                  <ComboDrop><Caret $before={0} $color="#111" /></ComboDrop>
                </ComboBox>
              </ComboRow>
              <StatusBox>Idle</StatusBox>
              <SequenceBox>
                <Scroller>
                  <Loop $open $color="#6d9cc4" $margin="-21px 0 0 3px" $padding="0 0 15px 0">
                    {loopA.map((s, i) => <StepCard key={i} step={s} />)}
                    <LoopEnd label="A" color="#6d9cc4" />
                  </Loop>
                  <Loop $color="#a9d0ee" $margin="14px 0 0 3px" $padding="4px 0 15px 0">
                    {loopB.map((s, i) => <StepCard key={i} step={s} />)}
                    <LoopEnd label="B" color="#a9d0ee" />
                  </Loop>
                  <Loop $color="#6a93b8" $gap={5} $margin="13px 0 0 3px" $padding="5px 0 15px 0">
                    {loopC.map((s, i) => <StepCard key={i} step={s} />)}
                  </Loop>
                </Scroller>
                <ScrollTrack>
                  <ScrollArrow>▲</ScrollArrow>
                  <ScrollThumb>≡</ScrollThumb>
                  <ScrollArrow $push="auto">▼</ScrollArrow>
                </ScrollTrack>
              </SequenceBox>
              <PaneRule />
              <TreeBox>
                <TreeList>
                  <TreeItem><FolderIcon />Logs</TreeItem>
                  <TreeItem><FolderIcon camera />Snapshots</TreeItem>
                </TreeList>
                <TreeScroll><span>▲</span><span>▼</span></TreeScroll>
              </TreeBox>
              <BottomBand />
            </LeftPane>

            <RightPane>
              <TabStrip>
                <Tab $w={100}><WrenchIcon />Step Setup</Tab>
                <Tab $active $w={120}><DataTabIcon />Data View</Tab>
              </TabStrip>
              <AddDisplayBar $h={23}>
                <AddDisplayIcon />
                <ToolLabel $before={8}>Add Display</ToolLabel>
                <Caret $before={8} $after={17} />
                <span>Export</span>
              </AddDisplayBar>
              <SectionBar $h={19} $bg="#dad6ce"><GraphGlyph />Frequency Graph</SectionBar>
              <GraphPane>
                <GridPlot
                  id="leftplot"
                  view={[188, 132, 542, 724]}
                  rect={{ l: 245, t: 141, r: 730, b: 835 }}
                  xPx={leftX}
                  yPx={leftY}
                  xStep={2.5}
                  yStep={0.2}
                  xTicks={kTicks(27.5)}
                  yTicks={leftYTicks}
                  yLabel={{ x: 203, y: 479, text: "Magnitude (V pk)" }}
                >
                  <Spikes list={leftSpikes} xPx={leftX} yPx={leftY} bottom={835} />
                </GridPlot>
                <ToolRow $left={56}><ZoomTools /></ToolRow>
              </GraphPane>
              <SectionBar $h={20} $rule $bg="#cdc9bf"><ChannelIcon />Channel View</SectionBar>
              <ChannelTools>
                View
                <ChannelCombo>
                  Hardware
                  <ChannelDrop><Caret $before={0} $color="#111" /></ChannelDrop>
                </ChannelCombo>
                <RefreshIcon />
                <ToolLabel $before={5}>Refresh</ToolLabel>
              </ChannelTools>
              <ChannelTable>
                {["Physical Channel", "Acquire", "Measurement Type", "Max", "Min", "Scaled Units", ""].map((h, i) => (
                  <HeadCell key={i}>{h}</HeadCell>
                ))}
                <BodyCell $start>
                  <PlusBox $l={5} $r={6} />
                  <PciIcon />
                  <DeviceName>Dev2 (PCI-4461)</DeviceName>
                </BodyCell>
                <BodyCell><CheckBox><svg width="9" height="9" viewBox="0 0 9 9" fill="none"><path d="M1 4.5l2.5 3L8 1" stroke="#334" strokeWidth="1.6" /></svg></CheckBox></BodyCell>
                <BodyCell $pad="0 18px 0 0">Voltage<CellDrop><Caret $before={0} $color="#111" /></CellDrop></BodyCell>
                <BodyCell />
                <BodyCell />
                <BodyCell $pad="0 18px 0 0">Volts<CellDrop><Caret $before={0} $color="#111" /></CellDrop></BodyCell>
                <BodyCell />
              </ChannelTable>
              <ChannelFill />
            </RightPane>
          </Body>
        </MainWindow>

        <FloatWindow $x={334} $y={4} $w={397} $h={253} $edge $pad="6px 7px 7px 7px">
          <WinTitle $h={17}><TimeGlyph />Time Graph<CloseIcon /></WinTitle>
          <WinContent>
            <GridPlot
              id="timeplot"
              view={[342, 27, 381, 133]}
              rect={{ l: 390, t: 36, r: 684, b: 138, yFrom: -15 }}
              xPx={timeX}
              yPx={timeY}
              xStep={100}
              yStep={5}
              xTicks={timeXTicks}
              yTicks={timeYTicks}
              yLabel={{ x: 357, y: 88, text: "Voltage (V)" }}
            >
              <rect x="390" y={timeY(2)} width="294" height={timeY(-2) - timeY(2)} fill="#fff" />
              <path d={wavePath()} fill="#fff" />
            </GridPlot>
            <ToolRow $left={49}>
              <ZoomTools />
              <AxisTitle $offset={62}>Time (s)</AxisTitle>
            </ToolRow>
            <OverviewBlock>
              <OverviewSvg width="381" height="29" viewBox="-76 -2 381 29">
                <rect x="0" y="0" width="284" height="27" fill="#0000a8" />
                <path d={zigzagPath()} fill="#fff" />
                <rect x="-1" y="-1" width="1.5" height="28" fill="#6b6238" />
                <rect x="283" y="8" width="2" height="12" fill="#f4e9a0" />
                <rect x="0" y="-1" width="284" height="1" fill="#555" />
              </OverviewSvg>
              <OverviewScroll>
                <MiniBtn><MiniMag /></MiniBtn>
                <MiniBtn><MiniMag plus /></MiniBtn>
                <MiniArrow $w={20}>◂</MiniArrow>
                <OverThumb>|||</OverThumb>
                <MiniArrow $w={20}>▸</MiniArrow>
              </OverviewScroll>
              <ChartSvg width="381" height="17" viewBox="342 233 381 17">
                <g stroke="#333" shapeRendering="crispEdges">
                  {[419, 533, 646, 703].map((x) => <line key={x} x1={x} x2={x} y1="234" y2="238" />)}
                </g>
                <g fontSize="9" fontWeight="bold">
                  <text x="418" y="247" textAnchor="middle">0</text>
                  <text x="533" y="247" textAnchor="middle">200m</text>
                  <text x="646" y="247" textAnchor="middle">400m</text>
                  <text x="722" y="247" textAnchor="end">499,966m</text>
                </g>
              </ChartSvg>
            </OverviewBlock>
          </WinContent>
        </FloatWindow>

        <FloatWindow $x={730} $y={0} $w={950} $h={1008} $pad="0 0 5px 7px">
          <WinTitle $h={19}><GraphGlyph />Frequency Graph<CloseIcon /></WinTitle>
          <WinContent>
            <GridPlot
              id="rightplot"
              view={[738, 19, 942, 961]}
              rect={{ l: 793, t: 28, r: 1637, b: 958 }}
              xPx={rightX}
              yPx={rightY}
              xStep={2.5}
              yStep={20}
              xTicks={[...kTicks(42.5), [44.43, "44,43k"]]}
              yTicks={rightYTicks}
              yLabel={{ x: 753, y: 493, text: "Magnitude (EU pk)" }}
            >
              <Spikes list={rightSpikes} xPx={rightX} yPx={rightY} bottom={958} />
              <g fill="#fff">
                {rightNoise.map(([k, m], i) => <rect key={i} x={rightX(k)} y={rightY(m)} width={1} height={958 - rightY(m)} />)}
              </g>
              <line x1="793" x2="1637" y1="957.5" y2="957.5" stroke="#d8d8d8" />
            </GridPlot>
            <ToolRow $left={55}>
              <ZoomTools />
              <AxisTitle $offset={303}>Frequency (Hz)</AxisTitle>
            </ToolRow>
          </WinContent>
        </FloatWindow>

        <EdgeStrip />
        <EdgeStrip $right />
      </Desktop>
    </>
  );
}
